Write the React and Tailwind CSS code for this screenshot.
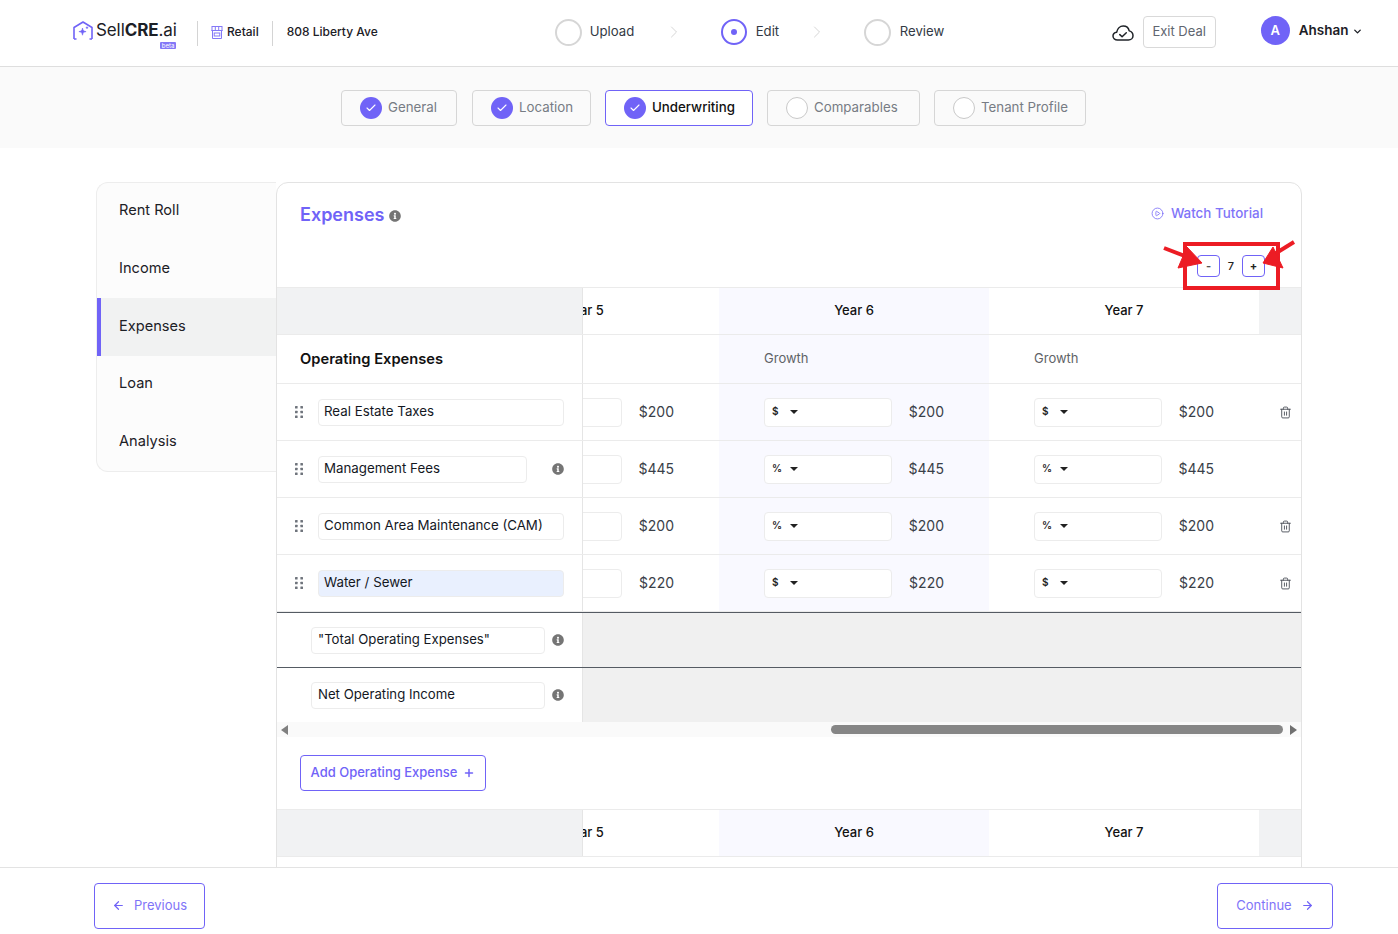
import React from "react";
import { ArrowLeft, ArrowRight, Check, ChevronDown, ChevronRight, CirclePlay, Plus, Trash2 } from "lucide-react";
import { FaInfoCircle } from "react-icons/fa";

const tabs = [
  { label: "General", done: true, cls: "w-[116px]" },
  { label: "Location", done: true, cls: "w-[119px] ml-[15px]" },
  { label: "Underwriting", done: true, active: true, cls: "w-[148px] ml-[14px]" },
  { label: "Comparables", cls: "w-[153px] ml-[14px]" },
  { label: "Tenant Profile", cls: "w-[152px] ml-[14px]" },
];

const sections = ["Rent Roll", "Income", "Expenses", "Loan", "Analysis"];

const expenseRows = [
  { name: "Real Estate Taxes", unit: "$", value: "$200", trash: true },
  { name: "Management Fees", unit: "%", value: "$445", info: true },
  { name: "Common Area Maintenance (CAM)", unit: "%", value: "$200", trash: true },
  { name: "Water / Sewer", unit: "$", value: "$220", trash: true, highlight: true },
];

function Grip() {
  return (
    <svg width="8" height="12" viewBox="0 0 8 12" className="fill-[#6f747c]">
      <rect x="0" y="0" width="2.6" height="2.6" rx="0.5" />
      <rect x="5.4" y="0" width="2.6" height="2.6" rx="0.5" />
      <rect x="0" y="4.7" width="2.6" height="2.6" rx="0.5" />
      <rect x="5.4" y="4.7" width="2.6" height="2.6" rx="0.5" />
      <rect x="0" y="9.4" width="2.6" height="2.6" rx="0.5" />
      <rect x="5.4" y="9.4" width="2.6" height="2.6" rx="0.5" />
    </svg>
  );
}

function Logo() {
  return (
    <svg width="20" height="19" viewBox="0 0 20 19" fill="none" className="stroke-[#7063f7]">
      <path d="M1 18V6.5L10 1l9 5.5V18" strokeWidth="1.6" strokeLinejoin="round" />
      <path d="M1 18h2.5M16.5 18H19" strokeWidth="1.6" />
      <path d="M9.5 7c.4 2.4 1.2 3.2 3.6 3.6-2.4.4-3.2 1.2-3.6 3.6-.4-2.4-1.2-3.2-3.6-3.6 2.4-.4 3.2-1.2 3.6-3.6z" className="fill-[#7063f7]" strokeWidth="0.6" />
      <path d="M14 5.5v2.4M12.8 6.7h2.4" strokeWidth="0.9" />
    </svg>
  );
}

function StoreIcon() {
  return (
    <svg width="12" height="13" viewBox="0 0 12 13" fill="none" stroke="#8478f7" strokeWidth="1" className="ml-[13px] -mt-[2px]">
      <rect x="1" y="0.5" width="10" height="4" />
      <path d="M4.3 0.5v4M7.7 0.5v4M0.5 4.5h11" />
      <path d="M1.5 4.5v8h9v-8" />
      <rect x="3.2" y="7" width="5.6" height="3" />
    </svg>
  );
}

function CloudCheck() {
  return (
    <svg width="22" height="16" viewBox="0 0 22 16" fill="none" stroke="#1f2328" strokeWidth="1.5" strokeLinecap="round" strokeLinejoin="round">
      <path d="M5.5 15C3 15 1 13.3 1 11.1c0-2 1.6-3.6 3.7-3.9C5.3 3.6 8 1 11.2 1c3 0 5.4 2 6 4.9 2.2.6 3.8 2.5 3.8 4.8 0 2.4-2 4.3-4.6 4.3z" />
      <path d="M7.8 9.6l2.3 2.2 4.2-4" />
    </svg>
  );
}

function StepCircle({ active, className = "" }) {
  if (active) {
    return (
      <span className={`w-[26px] h-[26px] rounded-full border-2 border-[#7063f7] flex items-center justify-center shrink-0 ${className}`}>
        <span className="w-[6px] h-[6px] rounded-full bg-[#7063f7]" />
      </span>
    );
  }
  return <span className={`w-[27px] h-[27px] rounded-full border-2 border-[#d6d6d6] shrink-0 ${className}`} />;
}

function Header() {
  return (
    <header className="h-[67px] shrink-0 border-b border-[#dedede] bg-white flex items-center pl-[73px] text-[#1c2026]">
      <div className="relative flex items-center w-[104px] h-[26px] -mt-[5px]">
        <Logo />
        <span className="ml-[3px] text-[17px] tracking-[-0.1px] whitespace-nowrap">Sell<b className="font-bold">CRE</b>.ai</span>
        <span className="absolute left-[87px] top-[24px] w-[16px] h-[7px] rounded-[1px] bg-[#8478f7] text-white text-[6px] leading-[7px] text-center">beta</span>
      </div>
      <span className="ml-[20px] w-px h-[25px] bg-[#d4d4d4]" />
      <StoreIcon />
      <span className="ml-[4px] -mt-[2px] text-[12px] font-medium">Retail</span>
      <span className="ml-[13px] w-px h-[25px] bg-[#d4d4d4]" />
      <span className="ml-[14px] -mt-[2px] w-[100px] text-[12px] font-medium whitespace-nowrap">808 Liberty Ave</span>

      <div className="ml-[168px] flex items-center text-[13.2px] text-[#333a44] -mt-[2px]">
        <StepCircle />
        <span className="ml-[8px] w-[46px]">Upload</span>
        <ChevronRight size={20} strokeWidth={1.2} className="ml-[28px] text-[#d6d6d6]" />
        <StepCircle active className="ml-[37px]" />
        <span className="ml-[9px] w-[24px]">Edit</span>
        <ChevronRight size={20} strokeWidth={1.2} className="ml-[27px] text-[#d6d6d6]" />
        <StepCircle className="ml-[37px]" />
        <span className="ml-[9px] w-[46px]">Review</span>
      </div>

      <span className="ml-[166px] flex"><CloudCheck /></span>
      <button className="ml-[9px] -mt-[2px] w-[73px] h-[32px] rounded border border-[#d9d9d9] text-[13px] text-[#5f6670]">Exit Deal</button>
      <span className="ml-[45px] w-[29px] h-[29px] rounded-full bg-[#7063f7] text-white text-[13px] font-semibold flex items-center justify-center -mt-[5px]">A</span>
      <span className="ml-[9px] text-[13.5px] font-semibold -mt-[5px]">Ahshan</span>
      <ChevronDown size={11} strokeWidth={3} className="ml-[4px] -mt-[3px]" />
    </header>
  );
}

function TabStrip() {
  return (
    <div className="h-[81px] shrink-0 bg-[#fafafa] flex items-center pl-[341px]">
      {tabs.map((tab) => (
        <div
          key={tab.label}
          className={`${tab.cls} h-[36px] rounded border flex items-center pl-[18px] text-[13.3px] ${tab.active ? "border-[#7063f7] bg-white text-[#111] font-medium" : "border-[#d6d6d6] text-[#777c84]"}`}
        >
          {tab.done ? (
            <span className="w-[22px] h-[22px] rounded-full bg-[#7063f7] flex items-center justify-center text-white shrink-0">
              <Check size={12} strokeWidth={2.2} />
            </span>
          ) : (
            <span className="w-[22px] h-[22px] rounded-full border border-[#c9c9c9] bg-white shrink-0" />
          )}
          <span className="ml-[6px] whitespace-nowrap">{tab.label}</span>
        </div>
      ))}
    </div>
  );
}

function Sidebar() {
  return (
    <aside className="w-[180px] h-[290px] shrink-0 bg-[#fcfcfc] border border-r-0 border-[#ededed] rounded-l-xl overflow-hidden">
      {sections.map((name) => (
        <div
          key={name}
          className={`h-[57.6px] flex items-center pb-[1px] text-[14.6px] text-[#1c2026] ${name === "Expenses" ? "bg-[#f1f2f2] border-l-4 border-[#7063f7] pl-[18px]" : "pl-[22px]"}`}
        >
          {name}
        </div>
      ))}
    </aside>
  );
}

function YearHeader() {
  return (
    <div className="flex h-[48px] border-y border-[#ebebeb] text-[13px] font-medium text-[#111]">
      <div className="w-[306px] shrink-0 bg-[#f1f2f3] border-r border-[#e5e5e5]" />
      <div className="flex-1 overflow-hidden">
        <div className="flex -ml-[134px] h-full items-stretch">
          <div className="w-[270px] shrink-0 flex items-center justify-center">Year 5</div>
          <div className="w-[270px] shrink-0 bg-[#f9f9ff] flex items-center justify-center">Year 6</div>
          <div className="w-[270px] shrink-0 flex items-center justify-center">Year 7</div>
          <div className="w-[42px] shrink-0 bg-[#f1f2f3]" />
        </div>
      </div>
    </div>
  );
}

function YearCell({ unit, value, tint }) {
  return (
    <div className={`w-[270px] shrink-0 flex items-center pl-[45px] ${tint ? "bg-[#f9f9ff]" : ""}`}>
      <div className="w-[128px] h-[29px] rounded border border-[#ececec] bg-white flex items-center pl-[7px] pb-[1px] text-[10px] font-semibold text-[#222]">
        {unit && <span className="w-[18px]">{unit}</span>}
        {unit && <span className="w-0 h-0 border-x-4 border-x-transparent border-t-4 border-t-[#222]" />}
      </div>
      <span className="w-[52px] pb-[2px] text-right text-[14px] text-[#3a4048]">{value}</span>
    </div>
  );
}

function ExpenseRow({ row }) {
  return (
    <div className="flex h-[57px] border-b border-[#ebebeb]">
      <div className="w-[306px] shrink-0 border-r border-[#e5e5e5] flex items-center pl-[18px]">
        <Grip />
        <div className={`ml-[15px] h-[27px] rounded border border-[#ececec] flex items-center pl-[5px] text-[13.3px] text-[#14181f] whitespace-nowrap ${row.info ? "w-[209px]" : "w-[246px]"} ${row.highlight ? "bg-[#e9f0fe]" : ""}`}>
          {row.name}
        </div>
        {row.info && <FaInfoCircle size={12} className="ml-[25px] text-[#757575]" />}
      </div>
      <div className="flex-1 overflow-hidden">
        <div className="flex -ml-[134px] h-full items-stretch">
          {/* year 5 is scrolled under the sticky column, its selector stays hidden */}
          <YearCell value={row.value} />
          <YearCell unit={row.unit} value={row.value} tint />
          <YearCell unit={row.unit} value={row.value} />
          <div className="w-[42px] shrink-0 flex items-center pl-[20px]">
            {row.trash && <Trash2 size={13} strokeWidth={1.7} className="text-[#4b5058]" />}
          </div>
        </div>
      </div>
    </div>
  );
}

function SummaryRow({ label }) {
  return (
    <div className="flex h-[55px] border-t border-[#555b63]">
      <div className="w-[306px] shrink-0 border-r border-[#e5e5e5] flex items-center pl-[34px]">
        <div className="w-[234px] h-[27px] rounded border border-[#ececec] flex items-center pl-[6px] text-[13.2px] text-[#14181f] whitespace-nowrap">
          {label}
        </div>
        <FaInfoCircle size={12} className="ml-[7px] text-[#757575]" />
      </div>
      <div className="flex-1 bg-[#f0f0f0]" />
    </div>
  );
}

function ExpensesPanel() {
  return (
    <section className="w-[1026px] shrink-0 bg-white border border-[#e3e3e3] rounded-t-xl">
      <div className="h-[104px] px-[23px] pt-[18px]">
        <div className="flex items-start justify-between">
          <div className="flex items-center">
            <h2 className="text-[18px] font-semibold text-[#7063f7]">Expenses</h2>
            <FaInfoCircle size={12} className="ml-[5px] mt-[2px] text-[#757575]" />
          </div>
          <div className="flex items-center mr-[15px] mt-[2px] text-[13.4px] font-medium text-[#7f74f8]">
            <CirclePlay size={13} strokeWidth={1.4} className="text-[#6f62f7]" />
            <span className="ml-[7px]">Watch Tutorial</span>
          </div>
        </div>
        <div className="flex justify-end items-center mt-[27px] mr-[13px] text-[11px] font-medium text-[#222]">
          <span className="w-[23px] h-[22px] rounded border border-[#7063f7] flex items-center justify-center font-bold text-[#555]">-</span>
          <span className="w-[22px] text-center">7</span>
          <span className="w-[23px] h-[22px] rounded border border-[#7063f7] flex items-center justify-center font-bold">+</span>
        </div>
      </div>

      <YearHeader />

      <div className="flex h-[49px] border-b border-[#ebebeb]">
        <div className="w-[306px] shrink-0 border-r border-[#e5e5e5] flex items-center pl-[23px] text-[14.7px] font-semibold text-[#111]">
          Operating Expenses
        </div>
        <div className="flex-1 overflow-hidden">
          <div className="flex -ml-[134px] h-full items-stretch text-[13px] text-[#5f6368]">
            <div className="w-[270px] shrink-0" />
            <div className="w-[270px] shrink-0 bg-[#f9f9ff] flex items-center pl-[45px]">Growth</div>
            <div className="w-[270px] shrink-0 flex items-center pl-[45px]">Growth</div>
          </div>
        </div>
      </div>

      {expenseRows.map((row) => (
        <ExpenseRow key={row.name} row={row} />
      ))}

      <SummaryRow label={'"Total Operating Expenses"'} />
      <SummaryRow label="Net Operating Income" />

      {/* horizontal scrollbar */}
      <div className="h-[15px] bg-[#fafafa] flex items-center pl-[4px]">
        <span className="w-0 h-0 border-y-[5px] border-y-transparent border-r-[7px] border-r-[#808080]" />
        <span className="ml-[543px] w-[452px] h-[9px] rounded-full bg-[#868686]" />
        <span className="ml-[7px] w-0 h-0 border-y-[5px] border-y-transparent border-l-[7px] border-l-[#707070]" />
      </div>

      <div className="pl-[23px] pt-[18px] pb-[18px]">
        <button className="w-[186px] h-[36px] rounded border border-[#7063f7] flex items-center justify-center text-[13px] font-medium text-[#7063f7]">
          Add Operating Expense
          <Plus size={12} strokeWidth={3} className="ml-[6px]" />
        </button>
      </div>

      <YearHeader />
      <div className="h-[60px]" />
    </section>
  );
}

// red markup drawn over the screenshot
function Annotation() {
  return (
    <>
      <div className="absolute left-[1183px] top-[242px] w-[97px] h-[48px] border-4 border-[#ec1c24]" />
      <svg className="absolute left-[1160px] top-[236px]" width="140" height="34" viewBox="0 0 140 34" fill="#ec1c24" stroke="#ec1c24">
        <path d="M4 12l26 10" strokeWidth="4" />
        <path d="M27 11L18 32 42 27z" strokeWidth="1" />
        <path d="M134 6l-21 13" strokeWidth="4" />
        <path d="M113 11l10 21-20-5z" strokeWidth="1" />
      </svg>
    </>
  );
}

function Footer() {
  return (
    <footer className="h-[67px] shrink-0 bg-white border-t border-[#e3e3e3] pt-[15px] pl-[94px] pr-[65px] flex justify-between items-start">
      <button className="w-[111px] h-[46px] rounded border border-[#7063f7] flex items-center justify-center pb-[1px] text-[13px] text-[#7f74f8]">
        <ArrowLeft size={13} strokeWidth={2.2} className="text-[#7063f7]" />
        <span className="ml-[9px]">Previous</span>
      </button>
      <button className="w-[116px] h-[46px] rounded border border-[#7063f7] flex items-center justify-center pb-[1px] text-[13px] text-[#7f74f8]">
        <span className="mr-[9px]">Continue</span>
        <ArrowRight size={13} strokeWidth={2.2} className="text-[#7063f7]" />
      </button>
    </footer>
  );
}

export default function App() {
  return (
    <div className="relative w-[1398px] h-[934px] overflow-hidden bg-white flex flex-col font-['Inter',sans-serif]">
      <Header />
      <TabStrip />
      <main className="flex-1 min-h-0 overflow-hidden flex items-start pl-[96px] pt-[34px]">
        <Sidebar />
        <ExpensesPanel />
      </main>
      <Footer />
      <Annotation />
    </div>
  );
}
